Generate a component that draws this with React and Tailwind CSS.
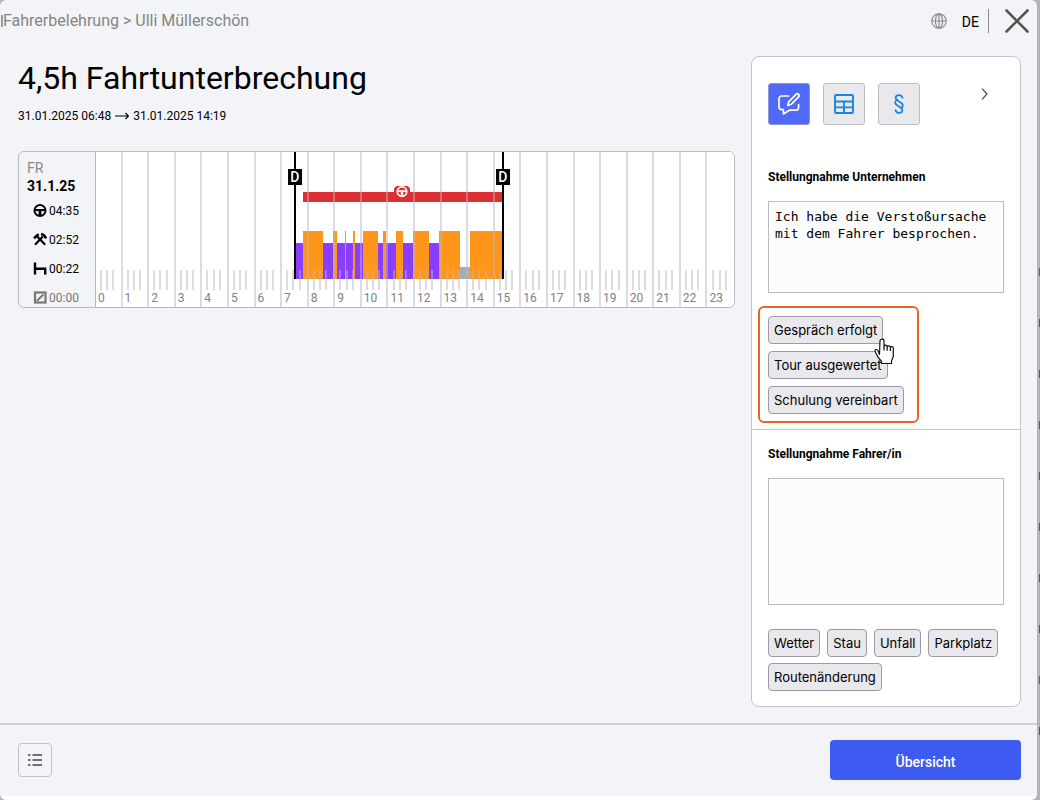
import { useState } from "react";

const DAY = 1440;
const pct = (minutes) => `${(minutes / DAY) * 100}%`;

const SEGMENTS = [
  ["work", 449, 467],
  ["drive", 467, 512],
  ["work", 512, 535],
  ["drive", 535, 544],
  ["work", 544, 562],
  ["drive", 562, 565],
  ["work", 565, 579],
  ["drive", 579, 584],
  ["work", 584, 602],
  ["drive", 602, 636],
  ["work", 636, 648],
  ["drive", 648, 654],
  ["work", 654, 676],
  ["drive", 676, 694],
  ["work", 694, 715],
  ["drive", 715, 752],
  ["work", 752, 774],
  ["drive", 774, 822],
  ["rest", 822, 844],
  ["drive", 844, 918],
];

const STYLE = {
  work: { y: 91, h: 36, fill: "#8b3dff" },
  drive: { y: 79, h: 48, fill: "#ff9519" },
  rest: { y: 115, h: 12, fill: "#a9adb0" },
};

const HOURS = Array.from({ length: 24 }, (_, i) => i);

function WheelIcon({ className }) {
  return (
    <svg viewBox="0 0 14 14" className={className} fill="none" stroke="currentColor" aria-hidden="true">
      <circle cx="7" cy="6.5" r="5.500" strokeWidth="2" />
      <path d="M1.500 6h11" strokeWidth="2" />
      <path d="M7 6.500v5" strokeWidth="2.800" />
    </svg>
  );
}

function HammersIcon({ className }) {
  return (
    <svg viewBox="0 0 14 14" className={className} fill="none" stroke="currentColor" aria-hidden="true">
      <path d="M2 11.800 9.800 3.500M12.200 11.800 4.200 3.500" strokeWidth="2.100" />
      <path d="M1 5.200 5.600 1.100" strokeWidth="2.600" />
      <path d="M8 1.300c2 0 3.800 1.300 5.100 4.200" strokeWidth="2.500" />
    </svg>
  );
}

function BedIcon({ className }) {
  return (
    <svg viewBox="0 0 14 14" className={className} fill="none" stroke="currentColor" strokeWidth="2.400" aria-hidden="true">
      <path d="M2 .5v12M2 6.800h10.200v5.700" />
    </svg>
  );
}

function SlashBoxIcon({ className }) {
  return (
    <svg viewBox="0 0 14 14" className={className} fill="none" stroke="currentColor" strokeWidth="2.200" aria-hidden="true">
      <rect x="2" y="1.500" width="10.500" height="10" />
      <path d="M4 9.700 10.400 3.500" strokeWidth="1.900" />
    </svg>
  );
}

function GlobeIcon({ className }) {
  return (
    <svg viewBox="0 0 16 16" className={className} fill="none" stroke="currentColor" strokeWidth="1.200" aria-hidden="true">
      <circle cx="8" cy="8" r="7.200" />
      <ellipse cx="8" cy="8" rx="3.600" ry="7.200" />
      <path d="M8 .7v14.600M.7 8h14.600" />
    </svg>
  );
}

function CommentEditIcon() {
  return (
    <svg viewBox="0 0 24 24" className="size-6" fill="none" stroke="currentColor" strokeWidth="1.700" strokeLinecap="round" strokeLinejoin="round" aria-hidden="true">
      <path d="M11.500 4H4.800A2.800 2.800 0 0 0 2 6.800v8A2.800 2.800 0 0 0 4.800 17.600H6.400V22l6-3.800h6.400a2.800 2.800 0 0 0 2.800-2.800V12.500" />
      <path d="m10.800 13.400.9-3.600 7.400-7.400a1.700 1.700 0 0 1 2.500 2.500l-7.400 7.400z" />
    </svg>
  );
}

function TableIcon() {
  return (
    <svg viewBox="0 0 20 20" className="size-5" fill="none" stroke="currentColor" strokeWidth="1.900" aria-hidden="true">
      <rect x="1" y="1" width="18" height="18" rx="1" />
      <path d="M1 7.500h18M1 13.400h18M10 7.500V19" />
    </svg>
  );
}

function ParagraphIcon() {
  return (
    <svg viewBox="0 0 12 22" className="h-5 w-3" fill="none" stroke="currentColor" strokeWidth="1.900" strokeLinecap="round" aria-hidden="true">
      <path d="M9.800 4.200C9.300 2.200 8 1.200 6 1.200 3.800 1.200 2.300 2.400 2.300 4.200c0 3.800 7.900 4.200 7.900 8.400 0 1.500-1 2.400-2.200 2.800" />
      <path d="M2.200 17.800c.5 2 1.800 3 3.800 3 2.200 0 3.700-1.200 3.700-3 0-3.800-7.900-4.200-7.900-8.400 0-1.500 1-2.400 2.200-2.800" />
    </svg>
  );
}

function HandCursor() {
  return (
    <svg viewBox="0 0 20 27" className="pointer-events-none absolute right-[23px] top-[30px] h-[27px] w-5" fill="#fff" stroke="#111" strokeWidth="1.200" strokeLinejoin="round" aria-hidden="true">
      <path d="M5.500 16.500 4.200 13C3 10.800.6 11.200 1 13.200l3 6L7.500 23.500V25.500h10V23l1.800-4.500v-8.300c0-1.900-2.400-2.200-2.900-.7 0-1.900-2.700-2.300-3.200-.7 0-1.900-2.700-2.200-3.200-.6V3c0-2.400-4-2.400-4 0z" />
      <path d="M10 8v4.500M13.200 8.800v4M16.400 9.500V13" fill="none" />
    </svg>
  );
}

function Sidebar() {
  const rows = [
    [WheelIcon, "04:35", "text-black"],
    [HammersIcon, "02:52", "text-black"],
    [BedIcon, "00:22", "text-black"],
    [SlashBoxIcon, "00:00", "text-[#777]"],
  ];
  return (
    <div className="flex w-[77px] shrink-0 flex-col border-r border-[#b9bbc0] pl-2 pt-1.5">
      <div className="text-sm leading-5 text-[#8a8a8a]">FR</div>
      <div className="text-sm font-bold leading-4">31.1.25</div>
      <div className="flex flex-col gap-[13px] pl-1.5 pt-[9px]">
        {rows.map(([Icon, time, color]) => (
          <div key={time} className={`flex items-center gap-0.5 text-xs leading-4 ${color}`}>
            <Icon className="size-3.5" />
            <span>{time}</span>
          </div>
        ))}
      </div>
    </div>
  );
}

function DayMarker({ minute }) {
  return (
    <div className="absolute top-0 flex h-[127px] w-3.5 -translate-x-1/2 flex-col items-center" style={{ left: pct(minute) }}>
      <div className="absolute inset-y-0 w-0.5 bg-black" />
      <span className="relative mt-[17px] flex h-4 w-3.5 items-center justify-center bg-black text-sm font-medium text-white">D</span>
    </div>
  );
}

function Timeline() {
  return (
    <div className="flex h-[157px] overflow-hidden rounded-md border border-[#b9bbc0]">
      <Sidebar />
      <div className="relative min-w-0 flex-1 bg-white">
        <svg className="absolute inset-0 size-full" shapeRendering="crispEdges" role="img" aria-label="Tagesverlauf">
          {SEGMENTS.map(([kind, from, to]) => (
            <rect key={from} x={pct(from)} width={pct(to - from)} y={STYLE[kind].y} height={STYLE[kind].h} fill={STYLE[kind].fill} />
          ))}
          <rect x={pct(467)} width={pct(451)} y="40" height="10" fill="#dd2f32" />
        </svg>
        <div className="relative grid h-full grid-cols-24">
          {HOURS.map((hour) => (
            <div key={hour} className={`flex min-w-0 flex-col justify-end ${hour < 23 ? "border-r-2 border-[#b8babf]/50" : ""}`}>
              <div className="grid h-5 grid-cols-4">
                <i className="border-r-2 border-[#b8babf]/50" />
                <i className="border-r-2 border-[#b8babf]/50" />
                <i className="border-r-2 border-[#b8babf]/50" />
                <i />
              </div>
              <span className="pb-px pl-0.5 text-xs leading-4 text-[#808080]">{hour}</span>
            </div>
          ))}
        </div>
        <span className="absolute top-[34px] flex h-4 w-4 -translate-x-1/2 justify-center rounded-t bg-[#dd2f32] text-white" style={{ left: pct(691) }}>
          <WheelIcon className="size-3" />
        </span>
        <DayMarker minute={449} />
        <DayMarker minute={918} />
      </div>
    </div>
  );
}

function Tag({ children, onClick }) {
  return (
    <button type="button" onClick={onClick} className="h-7 rounded border border-[#9b9aa6] bg-[#e9e8ed] px-[5px] font-[Inter,sans-serif] text-[13px] leading-5 text-black">
      {children}
    </button>
  );
}

function BackgroundEdge() {
  return (
    <div className="flex w-[3px] shrink-0 flex-col gap-[43px] bg-[#b3b4b7] pt-[268px]" aria-hidden="true">
      {Array.from({ length: 10 }, (_, i) => (
        <i key={i} className="ml-0.5 h-2 w-px bg-[#55575c]" />
      ))}
    </div>
  );
}

export default function App() {
  const [company, setCompany] = useState("Ich habe die Verstoßursache mit dem Fahrer besprochen.");
  const [driver, setDriver] = useState("");
  const tool = "flex size-[42px] items-center justify-center rounded-[3px] border";
  const area = "block w-full resize-none border border-[#b9bbc0] bg-[#fcfcfc] px-1.5 py-1.5 font-['DejaVu_Sans_Mono',monospace] text-[13px] leading-[17px] text-black outline-none";
  return (
    <div className="flex min-h-screen bg-[#b3b4b7] font-[Roboto,sans-serif] text-black">
      <div className="flex min-w-0 flex-1 flex-col rounded-md border-b-4 border-white bg-[#f3f4f7]">
        <header className="flex h-[41px] items-center justify-between pr-2">
          <nav className="flex items-center text-base text-[#858585]">
            <i className="ml-px h-3 w-0.5 bg-[#9b9b9b]" />
            <span>Fahrerbelehrung &gt; Ulli Müllerschön</span>
          </nav>
          <div className="flex items-center">
            <GlobeIcon className="size-4 text-[#8b8b8b]" />
            <button type="button" className="ml-[15px] pt-0.5 text-sm">DE</button>
            <i className="ml-[9px] h-6 w-px bg-[#8b8b8b]" />
            <button type="button" aria-label="Schließen" className="ml-4 text-[#555]">
              <svg viewBox="0 0 24 24" className="size-6" stroke="currentColor" strokeWidth="2.600" strokeLinecap="round" aria-hidden="true">
                <path d="m1.500 1.500 21 21M22.500 1.500l-21 21" />
              </svg>
            </button>
          </div>
        </header>

        <main className="flex flex-1 items-start gap-4 px-4 pb-4 pt-[15px]">
          <section className="min-w-0 flex-1 pl-0.5">
            <h1 className="text-[32px] leading-[44px]">4,5h Fahrtunterbrechung</h1>
            <p className="mb-[27px] mt-2 flex items-center gap-1 text-xs leading-4">
              <span>31.01.2025 06:48</span>
              <svg viewBox="0 0 14 8" className="h-2 w-3.5" fill="none" stroke="currentColor" strokeWidth="1.200" aria-hidden="true">
                <path d="M0 4h13.500M10.500 1l3 3-3 3" />
              </svg>
              <span>31.01.2025 14:19</span>
            </p>
            <Timeline />
          </section>

          <aside className="w-[270px] shrink-0 rounded-lg border border-[#c3c5ca] bg-white">
            <div className="border-b border-[#c3c5ca] px-4 pb-4 pt-[26px]">
              <div className="flex gap-[13px]">
                <button type="button" aria-label="Stellungnahme" className={`${tool} border-[#8f95dd] bg-[#5069f6] text-white`}>
                  <CommentEditIcon />
                </button>
                <button type="button" aria-label="Tabelle" className={`${tool} border-[#bcbcc1] bg-[#e9e8ed] text-[#1a86dd]`}>
                  <TableIcon />
                </button>
                <button type="button" aria-label="Paragraf" className={`${tool} border-[#bcbcc1] bg-[#e9e8ed] text-[#1a86dd]`}>
                  <ParagraphIcon />
                </button>
                <button type="button" aria-label="Weiter" className="ml-auto mr-4 mt-[5px] h-3 text-[#444]">
                  <svg viewBox="0 0 7 12" className="h-3 w-[7px]" fill="none" stroke="currentColor" strokeWidth="1.200" aria-hidden="true">
                    <path d="m1 .7 5 5.300-5 5.300" />
                  </svg>
                </button>
              </div>
              <label htmlFor="company" className="mb-4 mt-11 block text-xs font-bold leading-4">Stellungnahme Unternehmen</label>
              <textarea id="company" value={company} onChange={(e) => setCompany(e.target.value)} className={`${area} h-[92px]`} />
              <div className="relative -mb-2.5 -ml-2.5 mt-[13px] flex w-[161px] flex-col items-start gap-[7px] rounded-md border-2 border-[#e8651d] px-2 pb-[7px] pt-2">
                <Tag>Gespräch erfolgt</Tag>
                <Tag>Tour ausgewertet</Tag>
                <Tag>Schulung vereinbart</Tag>
                <HandCursor />
              </div>
            </div>
            <div className="px-4 pb-[15px] pt-4">
              <label htmlFor="driver" className="mb-4 block text-xs font-bold leading-4">Stellungnahme Fahrer/in</label>
              <textarea id="driver" value={driver} onChange={(e) => setDriver(e.target.value)} className={`${area} h-[127px]`} />
              <div className="mt-6 flex flex-wrap gap-x-[7px] gap-y-1.5">
                <Tag>Wetter</Tag>
                <Tag>Stau</Tag>
                <Tag>Unfall</Tag>
                <Tag>Parkplatz</Tag>
                <Tag>Routenänderung</Tag>
              </div>
            </div>
          </aside>
        </main>

        <footer className="flex h-[73px] items-center justify-between border-t-2 border-[#d0d2d6] px-4 pb-0.5">
          <button type="button" aria-label="Liste" className="ml-0.5 flex size-[34px] items-center justify-center rounded border border-[#c0c2c7] text-[#444]">
            <svg viewBox="0 0 14 12" className="h-3 w-3.5" stroke="currentColor" strokeWidth="1.700" aria-hidden="true">
              <path d="M0 1h2.500M4.500 1H14M0 6h2.500M4.500 6H14M0 11h2.500M4.500 11H14" />
            </svg>
          </button>
          <button type="button" className="h-10 w-[191px] rounded bg-[#3d5af1] pt-1 text-sm font-medium text-white">Übersicht</button>
        </footer>
      </div>
      <BackgroundEdge />
    </div>
  );
}
